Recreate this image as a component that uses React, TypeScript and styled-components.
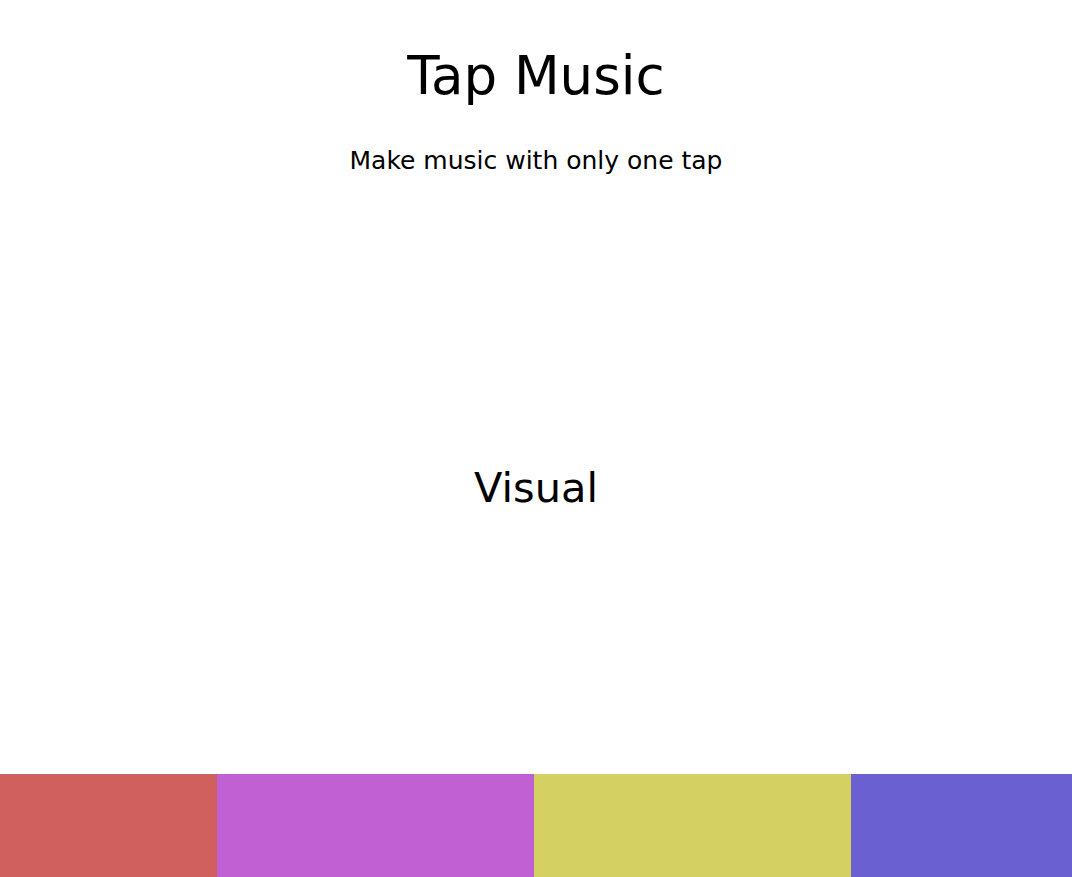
import React from "react";
import styled, { createGlobalStyle } from "styled-components";

const GlobalStyle = createGlobalStyle`
  html, body {
    margin: 0;
    padding: 0;
    background: #ffffff;
    font-family: "DejaVu Sans", "Open Sans", sans-serif;
    color: #000000;
  }
`;

const Page = styled.div`
  display: flex;
  flex-direction: column;
  height: 877px;
  overflow: hidden;
`;

const Header = styled.header`
  display: flex;
  flex-direction: column;
  align-items: center;
  padding-top: 44px;
  height: 200px;
  box-sizing: border-box;
`;

const Title = styled.h1`
  margin: 0;
  font-size: 53px;
  font-weight: 400;
  line-height: 64px;
`;

const Subtitle = styled.p`
  margin: 38px 0 0;
  font-size: 25px;
  line-height: 30px;
`;

const Stage = styled.main`
  flex: 1;
  display: flex;
  align-items: center;
  justify-content: center;
`;

const StageLabel = styled.h2`
  margin: 0;
  font-size: 41.5px;
  font-weight: 400;
`;

const Pads = styled.div`
  display: grid;
  grid-template-columns: 217px 317px 317px 1fr;
  height: 103px;
`;

const Pad = styled.button<{ $color: string }>`
  border: none;
  padding: 0;
  margin: 0;
  background: ${(p) => p.$color};
  cursor: pointer;
`;

const colors = ["#d0605e", "#c060d2", "#d4d062", "#6a60d2"];

export default function App() {
  return (
    <>
      <GlobalStyle />
      <Page>
        <Header>
          <Title>Tap Music</Title>
          <Subtitle>Make music with only one tap</Subtitle>
        </Header>
        <Stage>
          <StageLabel>Visual</StageLabel>
        </Stage>
        <Pads>
          {colors.map((c) => (
            <Pad key={c} $color={c} aria-label="pad" />
          ))}
        </Pads>
      </Page>
    </>
  );
}
